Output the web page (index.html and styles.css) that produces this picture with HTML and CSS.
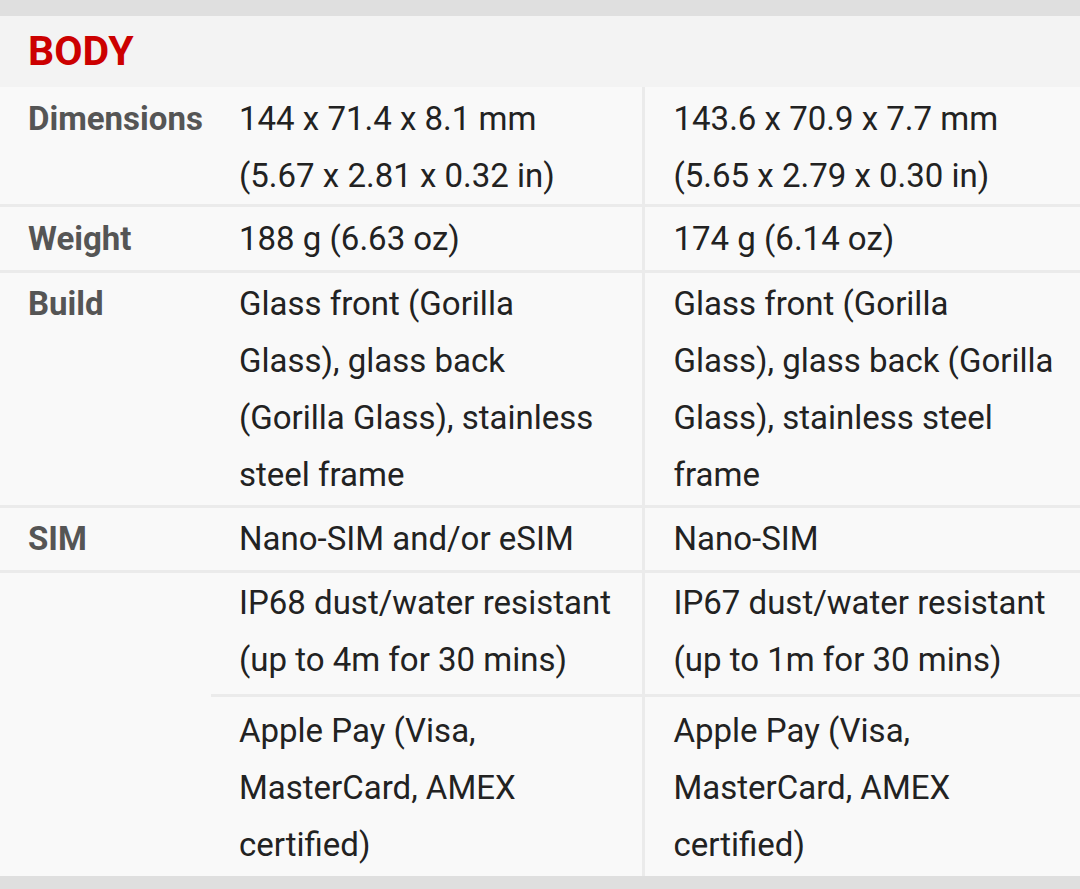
FILE: index.html
```html
<!DOCTYPE html>
<html lang="en">
<head>
<meta charset="utf-8">
<title>Body specs</title>
<link rel="stylesheet" href="styles.css">
</head>
<body>
<div class="page">
  <div class="band"></div>
  <div class="section">
    <h2 class="section-title">BODY</h2>
    <table class="specs">
      <colgroup>
        <col class="c-label">
        <col class="c-a">
        <col class="c-b">
      </colgroup>
      <tbody>
        <tr class="r-dim">
          <th>Dimensions</th>
          <td>144 x 71.4 x 8.1 mm<br>(5.67 x 2.81 x 0.32 in)</td>
          <td class="last">143.6 x 70.9 x 7.7 mm<br>(5.65 x 2.79 x 0.30 in)</td>
        </tr>
        <tr class="r-weight">
          <th>Weight</th>
          <td>188 g (6.63 oz)</td>
          <td class="last">174 g (6.14 oz)</td>
        </tr>
        <tr class="r-build">
          <th>Build</th>
          <td>Glass front (Gorilla Glass), glass back (Gorilla Glass), stainless steel frame</td>
          <td class="last">Glass front (Gorilla Glass), glass back (Gorilla Glass), stainless steel frame</td>
        </tr>
        <tr class="r-sim">
          <th>SIM</th>
          <td>Nano-SIM and/or eSIM</td>
          <td class="last">Nano-SIM</td>
        </tr>
        <tr class="r-ip">
          <th rowspan="2" class="empty"></th>
          <td>IP68 dust/water resistant (up to 4m for 30 mins)</td>
          <td class="last">IP67 dust/water resistant (up to 1m for 30 mins)</td>
        </tr>
        <tr class="r-pay final">
          <td>Apple Pay (Visa, MasterCard, AMEX certified)</td>
          <td class="last">Apple Pay (Visa, MasterCard, AMEX certified)</td>
        </tr>
      </tbody>
    </table>
  </div>
  <div class="band band-bottom"></div>
</div>
</body>
</html>
```

FILE: styles.css
```css
html, body {
  margin: 0;
  padding: 0;
  background: #dfdfdf;
}

.page {
  width: 1080px;
  height: 889px;
  display: flex;
  flex-direction: column;
  font-family: Roboto, "Noto Sans", sans-serif;
  overflow: hidden;
}

.band {
  height: 16px;
  background: #dfdfdf;
  flex: none;
}

.band-bottom {
  flex: 1;
}

.section {
  background: #f9f9f9;
  flex: none;
}

.section-title {
  margin: 0;
  height: 71px;
  box-sizing: border-box;
  padding: 11px 0 0 28px;
  background: #f3f3f3;
  color: #cc0000;
  font-size: 41px;
  font-weight: 700;
  line-height: 48px;
}

.specs {
  width: 1080px;
  border-collapse: collapse;
  table-layout: fixed;
  font-size: 33px;
  line-height: 57px;
}

.c-label { width: 211px; }
.c-a { width: 432px; }
.c-b { width: 437px; }

.specs th,
.specs td {
  padding: 2px 28px 3px 28px;
  vertical-align: top;
  text-align: left;
  border-bottom: 3px solid #ebebeb;
}

.specs th {
  color: #555555;
  font-weight: 700;
  font-size: 33px;
  padding-right: 0;
}

.specs td {
  color: #222222;
  font-weight: 400;
  border-right: 3px solid #ebebeb;
}

.specs td.last {
  border-right: none;
  padding-left: 29px;
  padding-right: 25px;
}

.r-dim th, .r-dim td { padding-top: 3px; padding-bottom: 0; }
.r-weight th, .r-weight td { padding-top: 3px; padding-bottom: 3px; }
.r-build th, .r-build td { padding-top: 2px; padding-bottom: 2px; }
.r-ip td { padding-top: 1px; padding-bottom: 6px; }
.r-pay td { padding-top: 5px; padding-bottom: 3px; }

.specs tr.final td {
  border-bottom: none;
}

.specs th.empty {
  border-bottom: none;
}
```
